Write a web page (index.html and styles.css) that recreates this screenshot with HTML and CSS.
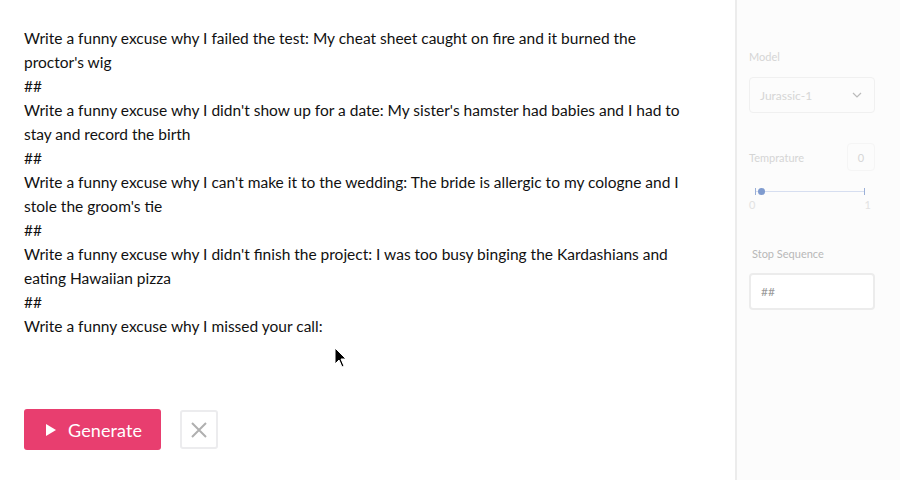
FILE: index.html
```html
<!DOCTYPE html>
<html>
<head>
<meta charset="utf-8">
<link rel="stylesheet" href="styles.css">
</head>
<body>
<div class="app">
  <main class="main">
    <div class="prompt">
      <p>Write a funny excuse why I failed the test: My cheat sheet caught on fire and it burned the proctor's wig</p>
      <p>##</p>
      <p>Write a funny excuse why I didn't show up for a date: My sister's hamster had babies and I had to stay and record the birth</p>
      <p>##</p>
      <p>Write a funny excuse why I can't make it to the wedding: The bride is allergic to my cologne and I stole the groom's tie</p>
      <p>##</p>
      <p>Write a funny excuse why I didn't finish the project: I was too busy binging the Kardashians and eating Hawaiian pizza</p>
      <p>##</p>
      <p>Write a funny excuse why I missed your call:</p>
    </div>
    <div class="actions">
      <button class="generate">
        <svg class="play" width="10" height="12" viewBox="0 0 10 12"><path d="M0 0 L10 6 L0 12 Z" fill="#fff"/></svg>
        <span>Generate</span>
      </button>
      <button class="clear">
        <svg width="18" height="18" viewBox="0 0 18 18"><path d="M2 2 L16 16 M16 2 L2 16" stroke="#b0b0b0" stroke-width="2" fill="none"/></svg>
      </button>
    </div>
  </main>
  <aside class="side">
    <div class="field model">
      <label class="lbl">Model</label>
      <div class="select">
        <span>Jurassic-1</span>
        <svg width="10" height="6" viewBox="0 0 10 6"><path d="M1 1 L5 5 L9 1" stroke="#bbb" stroke-width="1.2" fill="none"/></svg>
      </div>
    </div>
    <div class="field temp">
      <div class="temp-row">
        <label class="lbl">Temprature</label>
        <div class="num">0</div>
      </div>
      <div class="slider">
        <span class="tick"></span>
        <span class="track"></span>
        <span class="tick"></span>
        <span class="knob"></span>
      </div>
      <div class="scale"><span>0</span><span>1</span></div>
    </div>
    <div class="field stop">
      <label class="lbl">Stop Sequence</label>
      <div class="input">##</div>
    </div>
  </aside>
</div>
<svg class="cursor" width="14" height="22" viewBox="0 0 14 22"><path d="M1 1 L1 17 L5 13 L8 20 L10 19 L7 12 L12 12 Z" fill="#000" stroke="#fff" stroke-width="1"/></svg>
</body>
</html>
```
FILE: styles.css
```css
* { box-sizing: border-box; }
html, body { margin: 0; padding: 0; }
body {
  width: 900px;
  height: 480px;
  background: #fff;
  font-family: "Lato", "Open Sans", sans-serif;
  color: #111;
  overflow: hidden;
  position: relative;
}
.app {
  display: flex;
  height: 480px;
}
.main {
  width: 735px;
  padding: 26px 0 0 24px;
  display: flex;
  flex-direction: column;
}
.prompt {
  width: 665px;
  height: 383px;
  font-size: 15.5px;
  line-height: 24px;
}
.prompt p { margin: 0; }
.actions {
  display: flex;
  align-items: center;
  gap: 19px;
}
.generate {
  width: 137px;
  height: 41px;
  background: #e83e6f;
  border: none;
  border-radius: 3px;
  color: #fff;
  font-family: inherit;
  font-size: 18px;
  display: flex;
  align-items: center;
  padding: 0 0 0 22px;
  gap: 12px;
}
.generate span { letter-spacing: 0.1px; }
.clear {
  width: 38px;
  height: 39px;
  border: 2px solid #ececee;
  border-radius: 3px;
  background: #fff;
  display: flex;
  align-items: center;
  justify-content: center;
  padding: 0;
}
.side {
  width: 165px;
  border-left: 2px solid #ececec;
  background: #fcfcfc;
  padding: 50px 25px 0 12px;
  color: #d8d8d8;
  font-size: 11px;
}
.lbl { display: block; font-size: 11px; color: #d5d5d5; }
.select {
  margin-top: 14px;
  height: 36px;
  border: 1px solid #f0f0f0;
  border-radius: 4px;
  display: flex;
  align-items: center;
  justify-content: space-between;
  padding: 0 12px 0 10px;
  font-size: 12px;
  color: #d6d6d6;
}
.temp { margin-top: 30px; }
.temp-row {
  display: flex;
  justify-content: space-between;
  align-items: center;
}
.num {
  width: 28px;
  height: 28px;
  border: 1px solid #f5f5f5;
  border-radius: 4px;
  display: flex;
  align-items: center;
  justify-content: center;
  font-size: 11px;
  color: #d6d6d6;
}
.slider {
  position: relative;
  margin: 17px 0 0 6px;
  width: 110px;
  height: 7px;
  display: flex;
  align-items: center;
}
.tick { width: 1px; height: 7px; background: #9bb0d8; }
.track { flex: 1; height: 1px; background: #d6def0; }
.knob {
  position: absolute;
  left: 3px;
  top: 0;
  width: 7px;
  height: 7px;
  border-radius: 50%;
  background: #7f9bcf;
}
.scale {
  display: flex;
  justify-content: space-between;
  width: 122px;
  font-size: 11px;
  color: #e2e2e2;
  margin-top: 3px;
}
.stop { margin-top: 36px; padding-left: 3px; margin-left: -3px; }
.stop .lbl { color: #b8b8b8; padding-left: 3px; }
.input {
  margin-top: 13px;
  height: 37px;
  border: 2px solid #ececec;
  border-radius: 4px;
  background: #fff;
  display: flex;
  align-items: center;
  padding-left: 10px;
  font-size: 12px;
  color: #9a9a9a;
  width: 126px;
}
.cursor {
  position: absolute;
  left: 334px;
  top: 347px;
}
```
